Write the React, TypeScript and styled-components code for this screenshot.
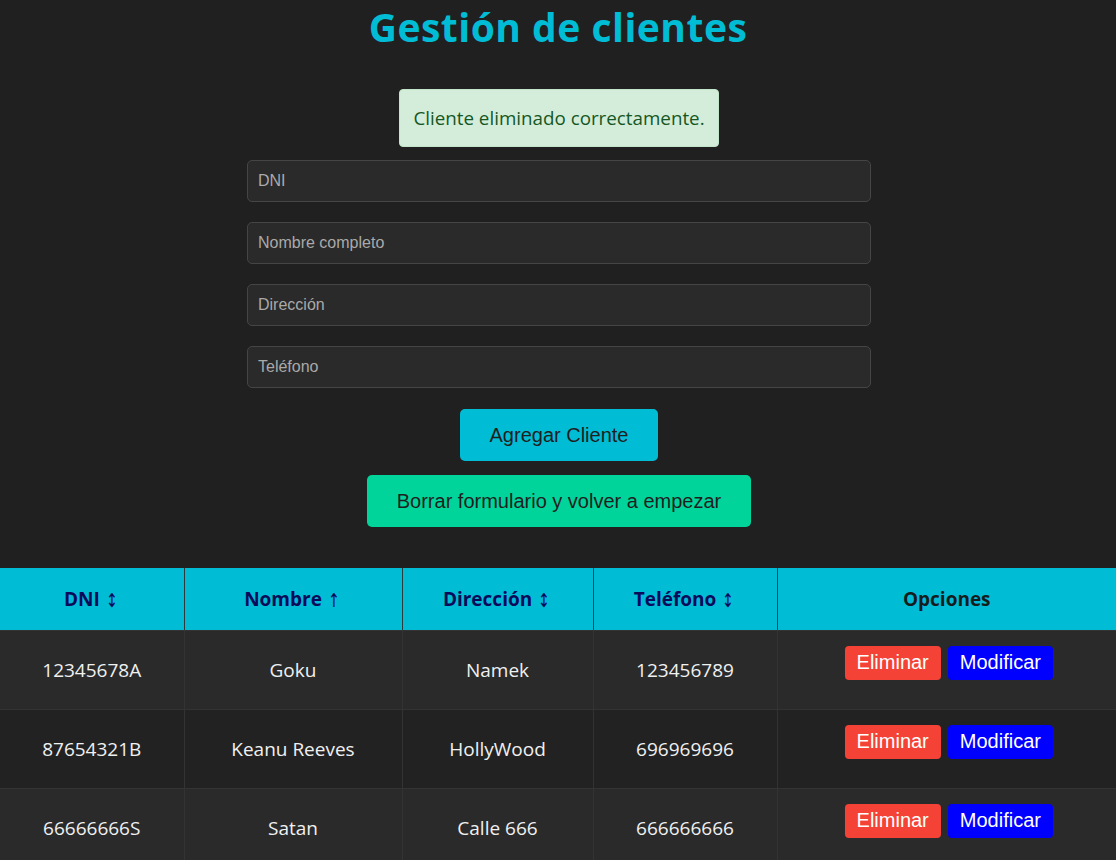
import React from "react";
import styled, { createGlobalStyle } from "styled-components";

const GlobalStyle = createGlobalStyle`
  html, body { margin: 0; padding: 0; background: #202020; }
  body { font-family: "Open Sans", "Noto Sans", sans-serif; color: #eeeeee; }
  * { box-sizing: border-box; }
`;

const Page = styled.div`
  display: flex;
  flex-direction: column;
  align-items: center;
  width: 1116px;
  min-height: 860px;
  overflow: hidden;
`;

const Title = styled.h1`
  margin: 4px 0 0;
  font-size: 39px;
  line-height: 46px;
  font-weight: 700;
  color: #00bcd4;
  letter-spacing: 0.5px;
`;

const Alert = styled.div`
  margin-top: 39px;
  margin-left: 2px;
  padding: 15px 13px;
  background: #d4edda;
  color: #155724;
  border: 1px solid #c3e6cb;
  border-radius: 4px;
  font-size: 18.8px;
  line-height: 26px;
`;

const Form = styled.form`
  display: flex;
  flex-direction: column;
  align-items: center;
  gap: 20px;
  margin-top: 13px;
  margin-left: 2px;
  width: 624px;
`;

const Input = styled.input`
  width: 624px;
  height: 42px;
  padding: 0 10px;
  background: #2a2a2a;
  border: 1px solid #454545;
  border-radius: 5px;
  color: #eeeeee;
  font-family: "Liberation Sans", Arial, sans-serif;
  font-size: 16px;
  outline: none;
  &::placeholder { color: #a9a9a9; }
`;

const ActionButton = styled.button<{ $bg: string; $top: number }>`
  margin-top: ${(p) => p.$top}px;
  margin-left: 2px;
  height: 52px;
  padding: 0 30px;
  border: none;
  border-radius: 5px;
  background: ${(p) => p.$bg};
  color: #1e1e1e;
  font-family: "Liberation Sans", Arial, sans-serif;
  font-size: 20px;
  cursor: pointer;
`;

const Table = styled.table`
  margin-top: 41px;
  width: 1116px;
  border-collapse: collapse;
  table-layout: fixed;
`;

const HeadCell = styled.th<{ $w: number; $plain?: boolean }>`
  width: ${(p) => p.$w}px;
  height: 62px;
  padding: 0;
  background: #00bcd4;
  color: ${(p) => (p.$plain ? "#141c1e" : "#0a0a5a")};
  font-size: 19px;
  font-weight: 700;
  text-align: center;
  border-left: 1px solid #2e3a3c;
  &:first-child { border-left: none; }
`;

const SortIcon = styled.span`
  margin-left: 4px;
  font-family: "DejaVu Sans", sans-serif;
  font-size: 19px;
  font-weight: 400;
  display: inline-block;
  transform: scaleX(0.75) translateY(1px);
`;

const Row = styled.tr<{ $odd: boolean }>`
  height: 79px;
  background: ${(p) => (p.$odd ? "#2a2a2a" : "#222222")};
`;

const Cell = styled.td`
  padding: 1px 0 0;
  text-align: center;
  vertical-align: middle;
  font-size: 19px;
  color: #f0f0f0;
  border-left: 1px solid #333333;
  border-top: 1px solid #333333;
  &:first-child { border-left: none; }
`;

const OptionsCell = styled(Cell)`
  vertical-align: top;
  padding-top: 15px;
`;

const Options = styled.div`
  display: flex;
  justify-content: center;
  gap: 7px;
  padding-left: 4px;
`;

const SmallButton = styled.button<{ $bg: string }>`
  height: 34px;
  padding: 0 12px;
  border: none;
  border-radius: 4px;
  background: ${(p) => p.$bg};
  color: #ffffff;
  font-family: "Liberation Sans", Arial, sans-serif;
  font-size: 20px;
  cursor: pointer;
`;

const clients = [
  { dni: "12345678A", nombre: "Goku", dir: "Namek", tel: "123456789" },
  { dni: "87654321B", nombre: "Keanu Reeves", dir: "HollyWood", tel: "696969696" },
  { dni: "66666666S", nombre: "Satan", dir: "Calle 666", tel: "666666666" },
];

export default function App() {
  return (
    <>
      <GlobalStyle />
      <Page>
        <Title>Gestión de clientes</Title>
        <Alert>Cliente eliminado correctamente.</Alert>
        <Form onSubmit={(e) => e.preventDefault()}>
          <Input placeholder="DNI" />
          <Input placeholder="Nombre completo" />
          <Input placeholder="Dirección" />
          <Input placeholder="Teléfono" />
        </Form>
        <ActionButton $bg="#00bcd4" $top={21}>Agregar Cliente</ActionButton>
        <ActionButton $bg="#00d49a" $top={14}>Borrar formulario y volver a empezar</ActionButton>
        <Table>
          <thead>
            <tr>
              <HeadCell $w={184}>DNI<SortIcon>↕</SortIcon></HeadCell>
              <HeadCell $w={218}>Nombre<SortIcon>↑</SortIcon></HeadCell>
              <HeadCell $w={191}>Dirección<SortIcon>↕</SortIcon></HeadCell>
              <HeadCell $w={184}>Teléfono<SortIcon>↕</SortIcon></HeadCell>
              <HeadCell $w={339} $plain>Opciones</HeadCell>
            </tr>
          </thead>
          <tbody>
            {clients.map((c, i) => (
              <Row key={c.dni} $odd={i % 2 === 0}>
                <Cell>{c.dni}</Cell>
                <Cell>{c.nombre}</Cell>
                <Cell>{c.dir}</Cell>
                <Cell>{c.tel}</Cell>
                <OptionsCell>
                  <Options>
                    <SmallButton $bg="#f44336">Eliminar</SmallButton>
                    <SmallButton $bg="#0000ff">Modificar</SmallButton>
                  </Options>
                </OptionsCell>
              </Row>
            ))}
          </tbody>
        </Table>
      </Page>
    </>
  );
}
